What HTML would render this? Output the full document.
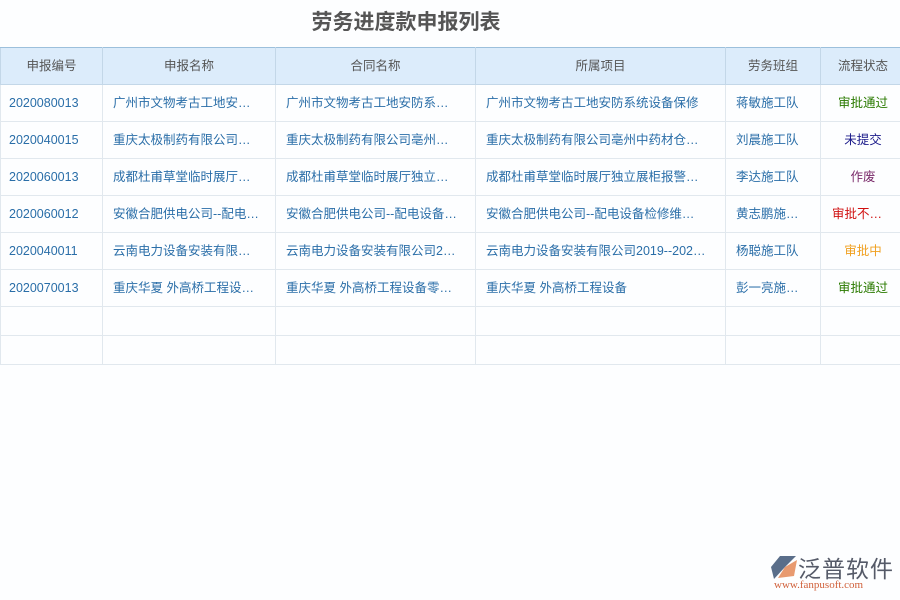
<!DOCTYPE html>
<html><head><meta charset="utf-8"><style>
body{margin:0;width:900px;height:600px;background:#fdfeff;font-family:"Liberation Sans","Noto Sans CJK SC",sans-serif;position:relative;overflow:hidden}
.t{position:absolute;top:8px;left:0;width:812px;text-align:center;font-size:21px;font-weight:bold;color:#555;line-height:30px}
table{position:absolute;top:47px;left:0;border-collapse:collapse;table-layout:fixed;width:905px;font-size:12.5px;line-height:16px}
th{background:#dcecfb;color:#555;font-weight:normal;height:34px;border:1px solid #c3d7e8;border-top:1px solid #9cc0dc;vertical-align:middle}
td{height:36px;border:1px solid #e1e8ee;color:#2a6ea8;white-space:nowrap;overflow:hidden;padding:0 10px;vertical-align:middle}
tr.e td{height:28px}
td.s{text-align:center;padding:0}
td.n{padding:0 8px;font-family:"Liberation Sans","Noto Sans CJK SC",sans-serif}
.logo{position:absolute;left:770px;top:552px}
</style></head><body>
<div class="t">劳务进度款申报列表</div>
<table>
<colgroup><col style="width:102px"><col style="width:173px"><col style="width:200px"><col style="width:250px"><col style="width:95px"><col style="width:85px"></colgroup>
<tr><th>申报编号</th><th>申报名称</th><th>合同名称</th><th>所属项目</th><th>劳务班组</th><th>流程状态</th></tr>
<tr><td class="n"><span>2020080013</span></td><td>广州市文物考古工地安…</td><td>广州市文物考古工地安防系…</td><td>广州市文物考古工地安防系统设备保修</td><td>蒋敏施工队</td><td class="s" style="color:#2a7a00">审批通过</td></tr>
<tr><td class="n">2020040015</td><td>重庆太极制药有限公司…</td><td>重庆太极制药有限公司亳州…</td><td>重庆太极制药有限公司亳州中药材仓…</td><td>刘晨施工队</td><td class="s" style="color:#1a1a8a">未提交</td></tr>
<tr><td class="n">2020060013</td><td>成都杜甫草堂临时展厅…</td><td>成都杜甫草堂临时展厅独立…</td><td>成都杜甫草堂临时展厅独立展柜报警…</td><td>李达施工队</td><td class="s" style="color:#7a2a6a">作废</td></tr>
<tr><td class="n">2020060012</td><td>安徽合肥供电公司--配电…</td><td>安徽合肥供电公司--配电设备…</td><td>安徽合肥供电公司--配电设备检修维…</td><td>黄志鹏施…</td><td class="s" style="color:#d01010;text-align:left;padding-left:11px">审批不…</td></tr>
<tr><td class="n">2020040011</td><td>云南电力设备安装有限…</td><td>云南电力设备安装有限公司2…</td><td>云南电力设备安装有限公司2019--202…</td><td>杨聪施工队</td><td class="s" style="color:#f0a020">审批中</td></tr>
<tr><td class="n">2020070013</td><td>重庆华夏 外高桥工程设…</td><td>重庆华夏 外高桥工程设备零…</td><td>重庆华夏 外高桥工程设备</td><td>彭一亮施…</td><td class="s" style="color:#2a7a00">审批通过</td></tr>
<tr class="e"><td></td><td></td><td></td><td></td><td></td><td></td></tr>
<tr class="e"><td></td><td></td><td></td><td></td><td></td><td></td></tr>
</table>
<div class="logo">
<svg width="28" height="26" style="position:absolute;left:0;top:3px"><path d="M10 1 L26 1 L15 12 L4 24 L1 12 Z" fill="#5a6e8a"/><path d="M15 12 L27 5 L24 21 L8 23 Z" fill="#e89a70"/></svg>
<div style="position:absolute;left:28px;top:-2px;font-size:23px;color:#555a68;white-space:nowrap;letter-spacing:1px">泛普软件</div>
<div style="position:absolute;left:4px;top:27px;font-size:11px;font-family:'Liberation Serif',serif;color:#d0603a;white-space:nowrap">www.fanpusoft.com</div>
</div>
</body></html>
